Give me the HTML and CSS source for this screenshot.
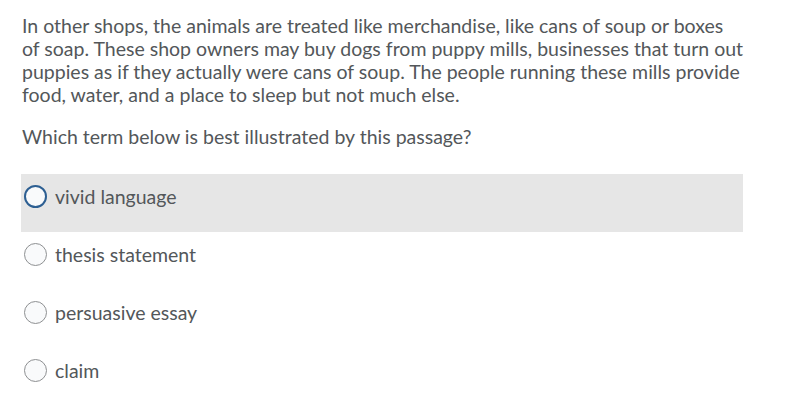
FILE: index.html
```html
<!DOCTYPE html>
<html>
<head>
<meta charset="utf-8">
<link rel="stylesheet" href="styles.css">
</head>
<body>
<div class="quiz">
  <p class="passage">In other shops, the animals are treated like merchandise, like cans of soup or boxes<br>of soap. These shop owners may buy dogs from puppy mills, businesses that turn out puppies as if they actually were cans of soup. The people running these mills provide food, water, and a place to sleep but not much else.</p>
  <p class="question">Which term below is best illustrated by this passage?</p>
  <div class="options">
    <div class="option active"><span class="radio"></span><span class="label">vivid language</span></div>
    <div class="option"><span class="radio"></span><span class="label">thesis statement</span></div>
    <div class="option"><span class="radio"></span><span class="label">persuasive essay</span></div>
    <div class="option"><span class="radio"></span><span class="label">claim</span></div>
  </div>
</div>
</body>
</html>
```
FILE: styles.css
```css
html, body {
  margin: 0;
  padding: 0;
  background: #ffffff;
}
body {
  font-family: Lato, "Open Sans", sans-serif;
  color: #53575a;
  font-size: 19.5px;
  line-height: 23px;
}
.quiz {
  width: 722px;
  padding: 14px 0 0 21px;
}
.passage {
  margin: 0;
  padding-left: 1px;
  width: 724px;
}
.question {
  margin: 19px 0 0 0;
  padding-left: 1px;
}
.options {
  margin-top: 26px;
  display: flex;
  flex-direction: column;
}
.option {
  height: 58px;
  box-sizing: border-box;
  display: flex;
  padding: 11px 0 0 3px;
  align-items: flex-start;
  gap: 8px;
}
.option.active {
  background: #e6e6e6;
}
.radio {
  width: 21px;
  height: 21px;
  border-radius: 50%;
  border: 1px solid #8e9092;
  background: #f9fafb;
  flex: none;
}
.option.active .radio {
  border: 2px solid #2d5f92;
  width: 19px;
  height: 19px;
}
.label {
  display: block;
}
```
